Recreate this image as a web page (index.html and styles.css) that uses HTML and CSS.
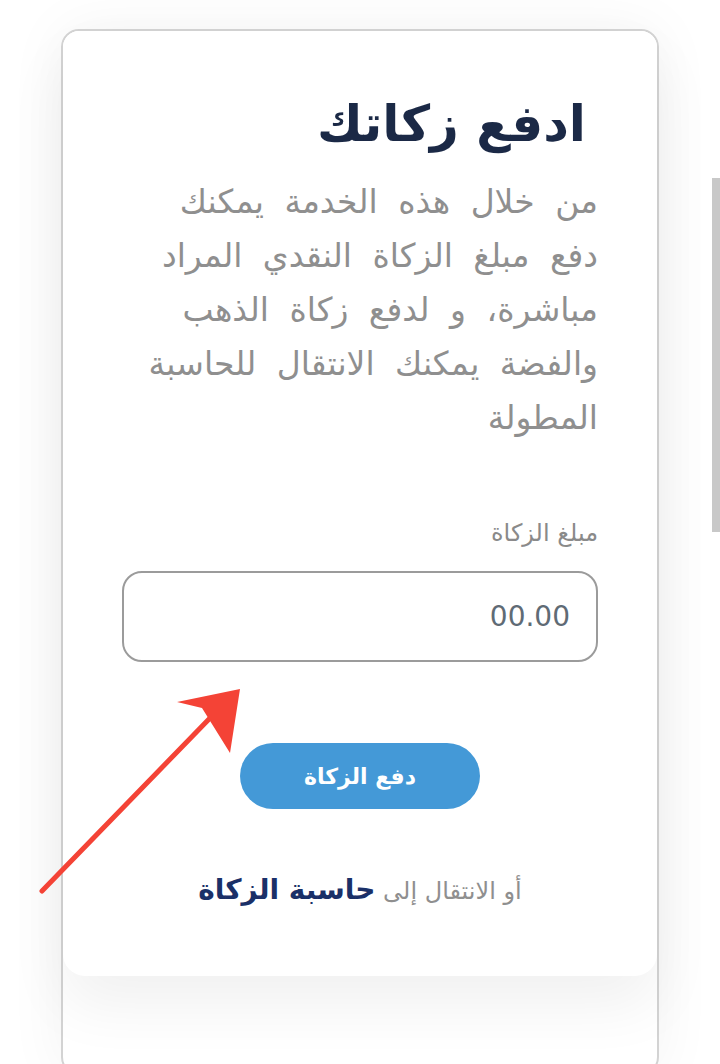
FILE: index.html
```html
<!DOCTYPE html>
<html lang="ar" dir="rtl">
<head>
  <meta charset="utf-8">
  <title>ادفع زكاتك</title>
  <link rel="stylesheet" href="styles.css">
</head>
<body>
<div class="page">
  <div class="frame">
    <div class="card">
      <h1 class="title">ادفع زكاتك</h1>
      <p class="intro">من خلال هذه الخدمة يمكنك<br>دفع مبلغ الزكاة النقدي المراد<br>مباشرة، و لدفع زكاة الذهب<br>والفضة يمكنك الانتقال للحاسبة<br>المطولة</p>

      <label class="field-label" for="amount">مبلغ الزكاة</label>
      <input class="amount" id="amount" type="text" placeholder="00.00">

      <div class="actions">
        <button class="pay-btn">دفع الزكاة</button>
      </div>

      <p class="alt-link">أو الانتقال إلى <a href="#">حاسبة الزكاة</a></p>
    </div>
  </div>
</div>

<!-- annotation arrow drawn over the screenshot -->
<svg class="arrow" width="260" height="230" viewBox="0 0 260 230">
  <line x1="42" y1="221" x2="212" y2="46" stroke="#f44336" stroke-width="5" stroke-linecap="round"/>
  <polygon points="240,19 177,32 202,38 230,83" fill="#f44336"/>
</svg>

<div class="scroll-thumb"></div>
</body>
</html>
```

FILE: styles.css
```css
html, body {
  margin: 0;
  height: 100%;
}
body {
  background: #fff;
  font-family: "DejaVu Sans", sans-serif;
  overflow: hidden;
}

.page {
  height: 100vh;
  box-sizing: border-box;
  overflow: hidden;
  padding: 29px 61px 0 61px;
}

.frame {
  height: 1042px;
  border: 2px solid #d3d3d3;
  border-radius: 18px;
  box-shadow: 0 0 60px rgba(0, 0, 0, 0.05);
}

.card {
  background: #fff;
  height: 945px;
  box-sizing: border-box;
  padding: 60px 59px 0 59px;
  border-radius: 16px 16px 22px 22px;
  box-shadow: 0 30px 60px rgba(0, 0, 0, 0.06);
}

.title {
  margin: 0 12px 0 0;
  font-size: 50px;
  font-weight: bold;
  color: #1b2946;
  line-height: 66px;
}

.intro {
  margin: 18px 0 0 0;
  font-size: 33px;
  word-spacing: 10px;
  line-height: 54px;
  color: #8f8f8f;
  white-space: nowrap;
}

.field-label {
  display: block;
  margin-top: 74px;
  font-size: 24px;
  color: #8a8a8a;
}

.amount {
  display: block;
  width: 100%;
  box-sizing: border-box;
  height: 91px;
  margin-top: 24px;
  padding: 0 26px;
  border: 2px solid #9b9b9b;
  border-radius: 20px;
  font-family: "DejaVu Sans", sans-serif;
  font-size: 28px;
  color: #5f6b75;
  text-align: right;
  direction: ltr;
  outline: none;
}
.amount::placeholder {
  color: #5f6b75;
}

.actions {
  margin-top: 81px;
  display: flex;
  justify-content: center;
}

.pay-btn {
  width: 240px;
  height: 66px;
  border: none;
  border-radius: 33px;
  background: #4499d7;
  color: #fff;
  font-family: "DejaVu Sans", sans-serif;
  font-size: 22px;
  font-weight: bold;
}

.alt-link {
  margin: 64px 0 0 0;
  text-align: center;
  font-size: 24px;
  color: #8f8f8f;
}
.alt-link a {
  color: #1a3068;
  font-weight: bold;
  text-decoration: none;
  font-size: 28px;
}

.arrow {
  position: absolute;
  left: 0;
  top: 670px;
}

.scroll-thumb {
  position: fixed;
  right: 0;
  top: 178px;
  width: 8px;
  height: 354px;
  background: #c8c8c8;
}
```
